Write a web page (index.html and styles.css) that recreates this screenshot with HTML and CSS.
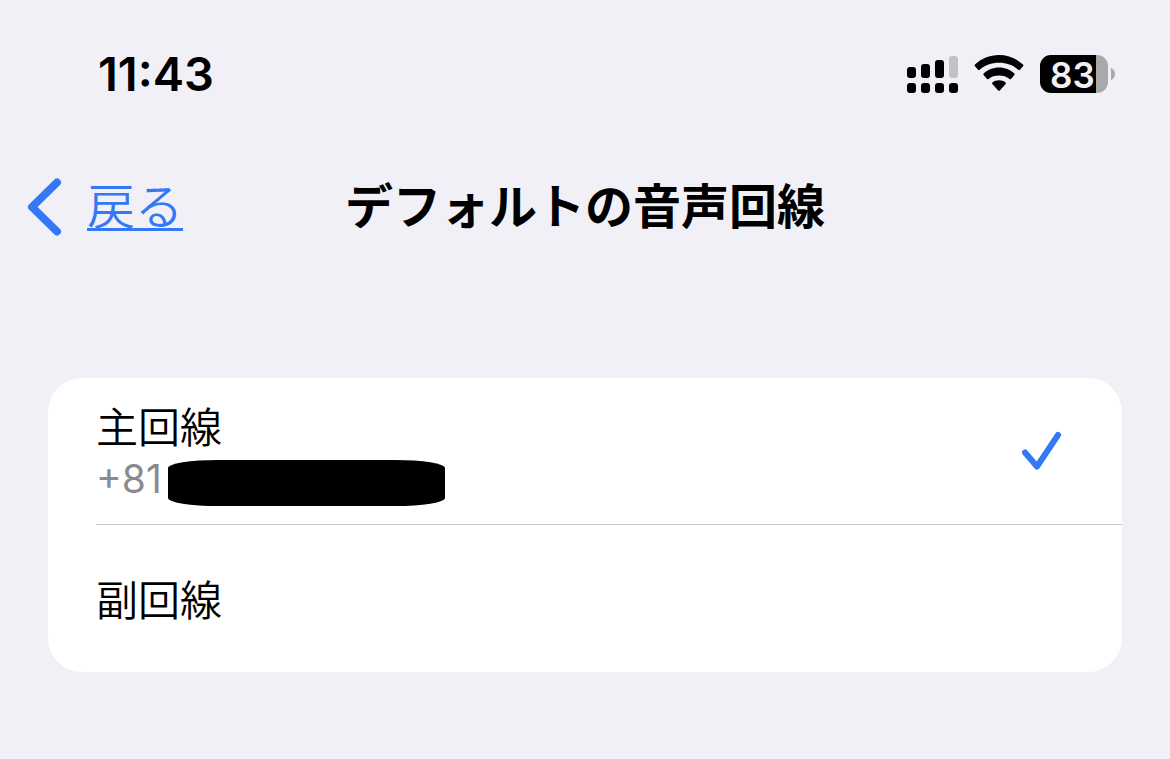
FILE: index.html
```
<!DOCTYPE html>
<html lang="ja">
<head>
    <meta charset="UTF-8">
    <meta name="viewport" content="width=device-width, initial-scale=1.0">
    <title>デフォルトの音声回線</title>
    <link rel="stylesheet" href="styles.css">
</head>
<body>
    <div class="status-bar">
        <span class="time">11:43</span>
        <div class="status-icons">
            <svg class="signal" width="51" height="38" viewBox="0 0 51 38" aria-hidden="true">
                <rect x="0" y="12" width="9" height="11" rx="3"/>
                <rect x="14" y="9" width="9" height="14" rx="3"/>
                <rect x="28" y="5" width="9" height="18" rx="3"/>
                <rect class="off" x="42" y="1" width="9" height="22" rx="3"/>
                <rect x="0" y="28" width="9" height="10" rx="3"/>
                <rect x="14" y="28" width="9" height="10" rx="3"/>
                <rect x="28" y="28" width="9" height="10" rx="3"/>
                <rect x="42" y="28" width="9" height="10" rx="3"/>
            </svg>
            <svg class="wifi" width="50" height="38" viewBox="0 0 50 38" aria-hidden="true">
                <path d="M25 0C15.600 0 7.200 3.600 1 9.600Q.3 10.400 1 11.200L4.100 14.800Q4.800 15.600 5.700 14.800C10.800 10.100 17.500 7.800 25 7.800S39.200 10.100 44.300 14.800Q45.200 15.600 45.900 14.800L49 11.200Q49.700 10.400 49 9.600C42.800 3.600 34.400 0 25 0Z"/>
                <path d="M25 12.600C19 12.600 13.600 14.900 9.600 18.600Q8.900 19.300 9.600 20.100L13 23.900Q13.700 24.600 14.500 23.900C17.300 21.400 21 20.400 25 20.400S32.700 21.400 35.500 23.900Q36.300 24.600 37 23.900L40.400 20.100Q41.100 19.300 40.400 18.600C36.400 14.900 31 12.600 25 12.600Z"/>
                <path d="M25 25.200C22.400 25.200 20.200 26 18.400 27.400Q17.600 28.100 18.300 28.900L24.200 35.400Q25 36.200 25.800 35.400L31.700 28.900Q32.400 28.100 31.600 27.400C29.800 26 27.600 25.200 25 25.200Z"/>
            </svg>
            <div class="battery">
                <span class="battery-level">83</span>
                <svg class="battery-tip" width="4" height="12" viewBox="0 0 4 12" aria-hidden="true">
                    <path d="M0 0C2.500 1 4 3.300 4 6S2.500 11 0 12Z"/>
                </svg>
            </div>
        </div>
    </div>

    <header class="nav">
        <a class="back" href="#">
            <svg width="35" height="58" viewBox="0 0 35 58" aria-hidden="true">
                <path d="M30 4.500L5 29L30 53.500"/>
            </svg>
            <span class="back-text">戻る</span>
        </a>
        <h1 class="title">デフォルトの音声回線</h1>
    </header>

    <form class="list">
        <label class="row">
            <span class="row-text">
                <span class="line-name">主回線</span>
                <span class="line-number">+81<span class="hidden-number"></span></span>
            </span>
            <span class="check">
                <input type="radio" name="line" checked>
                <svg width="42" height="40" viewBox="0 0 42 40" aria-hidden="true">
                    <path d="M4 21.500L16 35.500L37 4"/>
                </svg>
            </span>
        </label>
        <label class="row">
            <span class="row-text">
                <span class="line-name">副回線</span>
            </span>
            <span class="check">
                <input type="radio" name="line">
                <svg width="42" height="40" viewBox="0 0 42 40" aria-hidden="true">
                    <path d="M4 21.500L16 35.500L37 4"/>
                </svg>
            </span>
        </label>
    </form>
</body>
</html>
```
FILE: styles.css
```
* {
    box-sizing: border-box;
}

body {
    margin: 0;
    background-color: #f1f0f6;
    color: #000;
    font-family: Inter, "Noto Sans CJK JP", sans-serif;
}

.status-bar {
    display: flex;
    justify-content: space-between;
    align-items: center;
    height: 148px;
    padding: 0 55px 0 98px;
}

.time {
    font-size: 47px;
    font-weight: 600;
    line-height: 50px;
}

.status-icons {
    display: flex;
    align-items: center;
    gap: 16px;
}

.signal .off {
    fill: #c2c1c6;
}

/* Battery */
.battery {
    display: flex;
    align-items: center;
    gap: 3px;
}

.battery-level {
    width: 68px;
    height: 38px;
    padding-left: 10px;
    border-radius: 11px;
    background: linear-gradient(to right, #000 56px, #a9a9ab 56px);
    color: #f1f0f6;
    font-size: 35px;
    font-weight: 600;
    line-height: 40px;
}

.battery-tip {
    fill: #a9a9ab;
}

/* Navigation bar */
.nav {
    display: grid;
    grid-template-columns: 1fr auto 1fr;
    align-items: center;
    height: 118px;
    padding: 0 27px;
}

.back {
    display: flex;
    align-items: center;
    gap: 25px;
    color: #3478f6;
    font-size: 48px;
    font-weight: 350;
    line-height: 58px;
    text-decoration: none;
}

.back svg {
    fill: none;
    stroke: #3478f6;
    stroke-width: 8;
    stroke-linecap: round;
    stroke-linejoin: round;
}

.back-text {
    text-decoration: underline;
    text-decoration-thickness: 3px;
    text-underline-offset: 4px;
}

.title {
    margin: 0;
    font-size: 48px;
    font-weight: 700;
    line-height: 58px;
}

/* Phone line list */
.list {
    margin: 112px 48px 0;
    border-radius: 34px;
    background-color: #fff;
}

.row {
    display: flex;
    justify-content: space-between;
    align-items: center;
    min-height: 147px;
    margin-left: 48px;
    padding-right: 59px;
    cursor: pointer;
}

.row:not(:last-child) {
    border-bottom: 1px solid #c6c6c8;
}

.row-text {
    display: flex;
    flex-direction: column;
    padding-top: 4px;
}

.line-name {
    font-size: 42px;
    font-weight: 350;
    line-height: 56px;
}

.line-number {
    display: flex;
    gap: 6px;
    color: #8a8a8e;
    font-size: 39px;
    line-height: 46px;
}

.hidden-number {
    width: 277px;
    height: 46px;
    margin-top: 4px;
    border-radius: 50px / 8px;
    background-color: #000;
}

.check {
    display: grid;
}

.check input,
.check svg {
    grid-area: 1 / 1;
}

.check input {
    width: 42px;
    height: 40px;
    margin: 0;
    appearance: none;
}

.check svg {
    fill: none;
    stroke: #3478f6;
    stroke-width: 6;
    stroke-linecap: round;
    stroke-linejoin: round;
    visibility: hidden;
}

.check input:checked + svg {
    visibility: visible;
}
```
